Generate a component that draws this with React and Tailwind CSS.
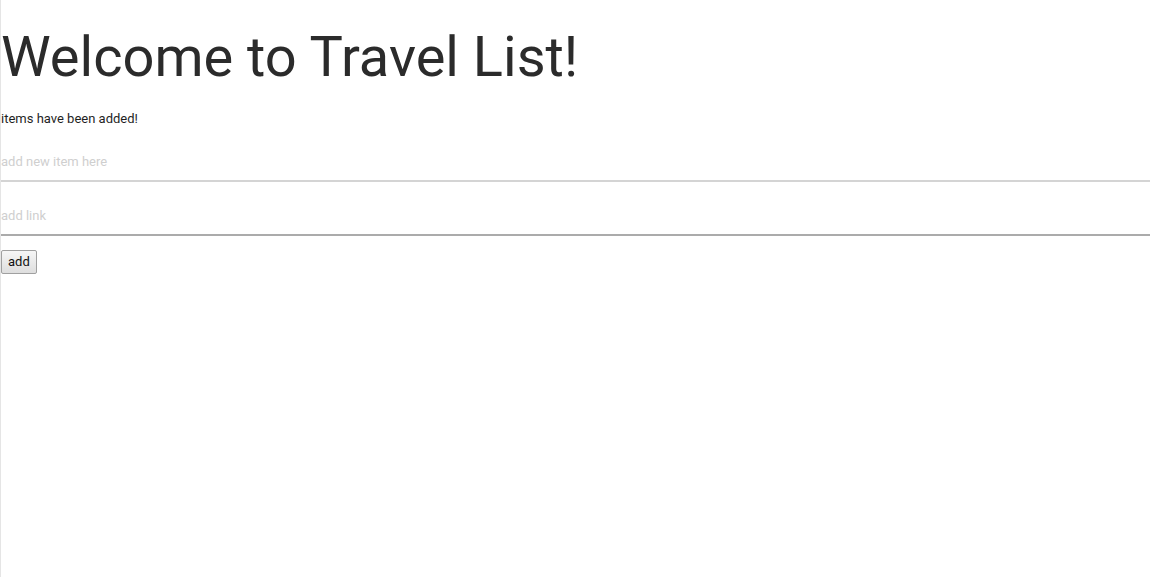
import React, { useState } from 'react'

const App = () => {
    const [item, setItem] = useState('')
    const [link, setLink] = useState('')
    return (
        <div className="min-h-[577px] bg-white border-l border-[#e5e5e5] font-['Roboto',sans-serif] text-[13px] text-[#222]">
            <h1 className="text-[56px] font-normal leading-none text-[#2b2b2b] pt-[29px] pb-[26px]">Welcome to Travel List!</h1>
            <p className="text-[13px] leading-[16px] text-[#1f1f1f]">items have been added!</p>
            <input
                value={item}
                onChange={e => setItem(e.target.value)}
                placeholder="add new item here"
                className="block w-full mt-[15px] h-[40px] border-b-2 border-[#d4d4d4] text-[13px] placeholder:text-[#cfcfcf] outline-none"
            />
            <input
                value={link}
                onChange={e => setLink(e.target.value)}
                placeholder="add link"
                className="block w-full mt-[14px] h-[40px] border-b-2 border-[#ababab] text-[13px] placeholder:text-[#cfcfcf] outline-none"
            />
            <button className="mt-[14px] px-[6px] h-[24px] text-[13px] text-[#111] border border-[#a0a0a0] rounded-[2px] bg-gradient-to-b from-[#f6f6f6] to-[#dedede]">
                add
            </button>
        </div>
    )
}

export default App
